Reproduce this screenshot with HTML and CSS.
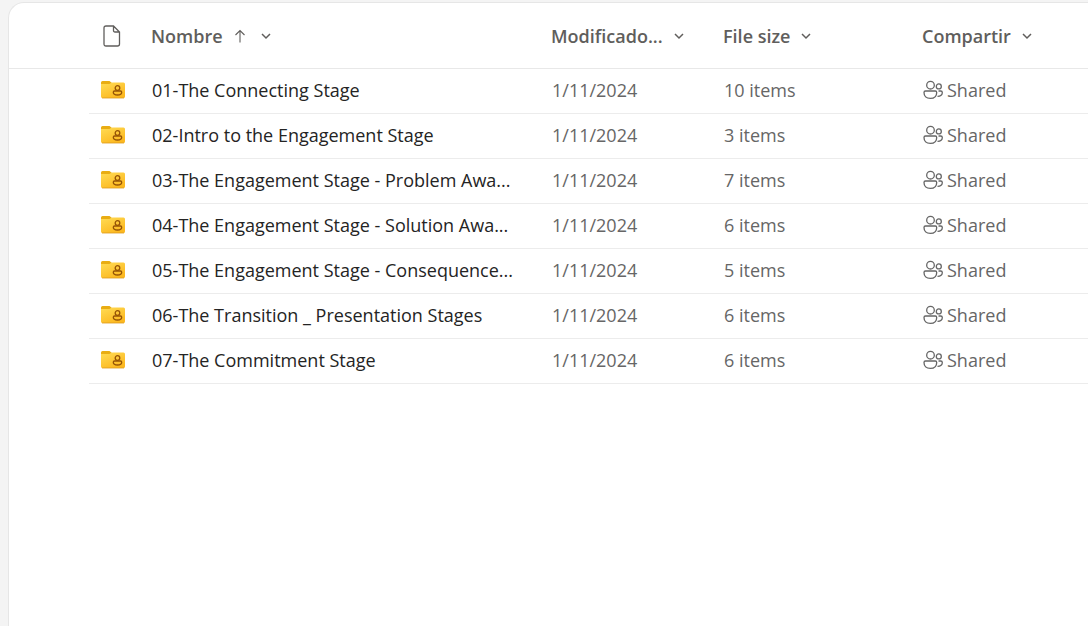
FILE: index.html
```html
<!DOCTYPE html>
<html lang="es">
<head>
<meta charset="utf-8">
<meta name="viewport" content="width=device-width, initial-scale=1">
<title>Files</title>
<link rel="stylesheet" href="styles.css">
</head>
<body>
<svg class="sprite" aria-hidden="true">
  <defs>
    <linearGradient id="folder-fill" x1="0" y1="0" x2="0.6" y2="1">
      <stop offset="0" stop-color="#ffdc55"/>
      <stop offset="1" stop-color="#fcb820"/>
    </linearGradient>
    <symbol id="folder" viewBox="0 0 26 20">
      <path d="M1 8V2.500Q1 1 2.500 1H9.500L12 3L10 6Z" fill="#e9ad13"/>
      <path d="M1 4H8.500Q9.500 4 10.300 3.500L11 3Q11.500 2.500 12.500 2.500H23.500Q25 2.500 25 4V16.500Q25 18 23.500 18H2.500Q1 18 1 16.500Z" fill="url(#folder-fill)"/>
      <path d="M2 18H24" stroke="#dc9a1c" stroke-width="0.800"/>
      <g fill="none" stroke="#965406" stroke-width="1.300">
        <circle cx="17.500" cy="8" r="2.300"/>
        <path d="M14.500 11H20.500Q21.700 11 21.700 12.200Q21.700 15 17.500 15Q13.300 15 13.300 12.200Q13.300 11 14.500 11Z"/>
      </g>
    </symbol>
    <symbol id="people" viewBox="0 0 20 20">
      <g fill="none" stroke="#666" stroke-width="1.300">
        <circle cx="7.500" cy="5.200" r="3.800"/>
        <circle cx="15.800" cy="6.400" r="2.500"/>
        <path d="M2.500 11H12.300Q13.700 11 13.700 12.400Q13.700 18.300 7.400 18.300Q1 18.300 1 12.400Q1 11 2.500 11Z"/>
        <path d="M15.500 11H17.700Q19.300 11 19.300 12.500Q19.300 16.300 14.500 16.300"/>
      </g>
    </symbol>
    <symbol id="chevron" viewBox="0 0 10 8">
      <path d="M1 2L5 6L9 2" fill="none" stroke="#605e5c" stroke-width="1.500"/>
    </symbol>
  </defs>
</svg>
<main class="panel">
  <table class="files">
    <colgroup>
      <col class="col-select"><col class="col-type"><col class="col-name"><col class="col-date"><col class="col-size"><col class="col-share">
    </colgroup>
    <thead>
      <tr>
        <td></td>
        <th scope="col" class="type"><button class="head" aria-label="Tipo"><svg class="doc" viewBox="0 0 18 22"><path d="M3 1H10.500L16.500 7V19Q16.500 21 14.500 21H3Q1 21 1 19V3Q1 1 3 1ZM10.500 1V5.500Q10.500 7 12 7H16.500" fill="none" stroke="#605e5c" stroke-width="1.300"/></svg></button></th>
        <th scope="col"><button class="head"><span>Nombre</span><svg class="arrow" viewBox="0 0 12 14"><path d="M6 13.500V1.500M1.500 6L6 1.500L10.500 6" fill="none" stroke="#605e5c" stroke-width="1.100"/></svg><svg class="chevron"><use href="#chevron"/></svg></button></th>
        <th scope="col"><button class="head"><span>Modificado...</span><svg class="chevron"><use href="#chevron"/></svg></button></th>
        <th scope="col"><button class="head"><span>File size</span><svg class="chevron"><use href="#chevron"/></svg></button></th>
        <th scope="col"><button class="head"><span>Compartir</span><svg class="chevron"><use href="#chevron"/></svg></button></th>
      </tr>
    </thead>
    <tbody>
      <tr><td></td><td class="type"><svg class="folder"><use href="#folder"/></svg></td><td><a class="name" href="#">01-The Connecting Stage</a></td><td>1/11/2024</td><td>10 items</td><td><button class="share"><svg class="people"><use href="#people"/></svg>Shared</button></td></tr>
      <tr><td></td><td class="type"><svg class="folder"><use href="#folder"/></svg></td><td><a class="name" href="#">02-Intro to the Engagement Stage</a></td><td>1/11/2024</td><td>3 items</td><td><button class="share"><svg class="people"><use href="#people"/></svg>Shared</button></td></tr>
      <tr><td></td><td class="type"><svg class="folder"><use href="#folder"/></svg></td><td><a class="name" href="#">03-The Engagement Stage - Problem Awa...</a></td><td>1/11/2024</td><td>7 items</td><td><button class="share"><svg class="people"><use href="#people"/></svg>Shared</button></td></tr>
      <tr><td></td><td class="type"><svg class="folder"><use href="#folder"/></svg></td><td><a class="name" href="#">04-The Engagement Stage - Solution Awa...</a></td><td>1/11/2024</td><td>6 items</td><td><button class="share"><svg class="people"><use href="#people"/></svg>Shared</button></td></tr>
      <tr><td></td><td class="type"><svg class="folder"><use href="#folder"/></svg></td><td><a class="name" href="#">05-The Engagement Stage - Consequence...</a></td><td>1/11/2024</td><td>5 items</td><td><button class="share"><svg class="people"><use href="#people"/></svg>Shared</button></td></tr>
      <tr><td></td><td class="type"><svg class="folder"><use href="#folder"/></svg></td><td><a class="name" href="#">06-The Transition _ Presentation Stages</a></td><td>1/11/2024</td><td>6 items</td><td><button class="share"><svg class="people"><use href="#people"/></svg>Shared</button></td></tr>
      <tr><td></td><td class="type"><svg class="folder"><use href="#folder"/></svg></td><td><a class="name" href="#">07-The Commitment Stage</a></td><td>1/11/2024</td><td>6 items</td><td><button class="share"><svg class="people"><use href="#people"/></svg>Shared</button></td></tr>
    </tbody>
  </table>
</main>
</body>
</html>
```

FILE: styles.css
```css
* {
  box-sizing: border-box;
}

body {
  margin: 0;
  padding: 2px 0 0 8px;
  min-height: 100vh;
  display: flex;
  background: #f4f4f4;
  color: #666;
  font-family: "Segoe UI", "Open Sans", "Noto Sans", sans-serif;
  font-size: 18px;
  line-height: 24px;
}

.sprite {
  position: absolute;
  width: 0;
  height: 0;
}

.panel {
  flex: 1;
  min-width: 0;
  background: #fff;
  border: solid #e6e6e6;
  border-width: 1px 0 0 1px;
  border-radius: 16px 0 0 0;
}

.files {
  width: 100%;
  table-layout: fixed;
  border-collapse: separate;
  border-spacing: 0;
}

.col-select { width: 80px; }
.col-type { width: 62px; }
.col-name { width: 400px; }
.col-date { width: 172px; }
.col-size { width: 199px; }

th,
td {
  padding: 0 0 0 1px;
  text-align: left;
  white-space: nowrap;
}

thead th,
thead td {
  height: 66px;
  padding-left: 0;
  border-bottom: 1px solid #e8e8e8;
}

tbody td {
  height: 45px;
  padding-bottom: 2px;
  border-bottom: 1px solid #ececec;
}

tbody td:first-child {
  border-bottom: 0;
}

td.type {
  padding-left: 11px;
}

th.type {
  padding-left: 14px;
}

button {
  padding: 0;
  border: 0;
  background: none;
  color: inherit;
  font: inherit;
  cursor: pointer;
}

.head {
  display: flex;
  align-items: center;
  gap: 11px;
  color: #605e5c;
  font-weight: 600;
}

svg {
  display: block;
  flex: none;
}

.name {
  color: #242424;
  text-decoration: none;
}

.share {
  display: flex;
  align-items: center;
  gap: 4px;
}

.doc { width: 18px; height: 22px; }
.arrow { width: 12px; height: 14px; margin-right: 4px; }
.chevron { width: 10px; height: 8px; }
.folder { width: 26px; height: 20px; }
.people { width: 20px; height: 20px; }
```
